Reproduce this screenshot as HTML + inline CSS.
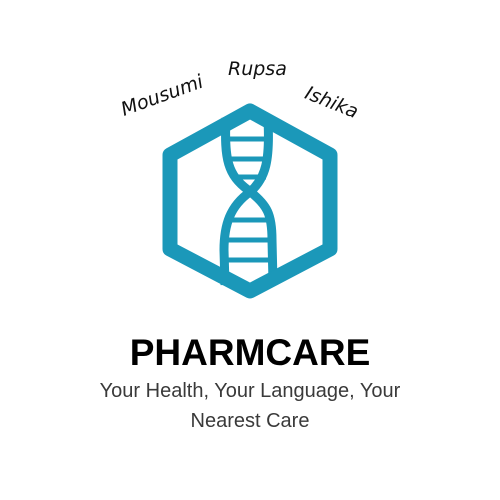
<!DOCTYPE html>
<html><head><style>
html,body{margin:0;padding:0;background:#fff;}
body{width:500px;height:500px;position:relative;overflow:hidden;font-family:"Liberation Sans",sans-serif;}
.t{position:absolute;white-space:nowrap;}
.sig{font-family:"DejaVu Sans","Liberation Sans",sans-serif;font-style:italic;font-size:19px;color:#111;}
</style></head><body>
<svg width="500" height="500" style="position:absolute;left:0;top:0">
  <g fill="none" stroke="#1b98b9">
    <path d="M226,118 C224,160 228,175 248,190 C268,205 272,215 272,240 L273,282" stroke-width="9"/>
    <path d="M268,120 C270,160 266,178 250,192 C230,206 224,225 224,250 L225,285" stroke-width="9"/>
    <g stroke-width="5">
      <line x1="228" y1="139" x2="268" y2="139"/>
      <line x1="228" y1="159" x2="268" y2="159"/>
      <line x1="232" y1="177" x2="266" y2="177"/>
      <line x1="232" y1="220" x2="268" y2="220"/>
      <line x1="228" y1="240" x2="270" y2="240"/>
      <line x1="228" y1="260" x2="272" y2="260"/>
    </g>
  </g>
  <polygon points="250,111 330,155 330,249 250,291 170,249 170,155" fill="none" stroke="#1b98b9" stroke-width="15" stroke-linejoin="round"/>
</svg>
<div class="t sig" style="left:228px;top:58px;">Rupsa</div>
<div class="t sig" style="left:118px;top:100px;transform:rotate(-20deg);transform-origin:left top;">Mousumi</div>
<div class="t sig" style="left:310px;top:82px;transform:rotate(22deg);transform-origin:left top;">Ishika</div>
<div class="t" style="left:0;width:500px;text-align:center;top:332px;font-size:37px;font-weight:bold;color:#000;">PHARMCARE</div>
<div class="t" style="left:0;width:500px;text-align:center;top:376px;font-size:20px;color:#3a3a3a;line-height:30px;">Your Health, Your Language, Your<br>Nearest Care</div>
</body></html>
